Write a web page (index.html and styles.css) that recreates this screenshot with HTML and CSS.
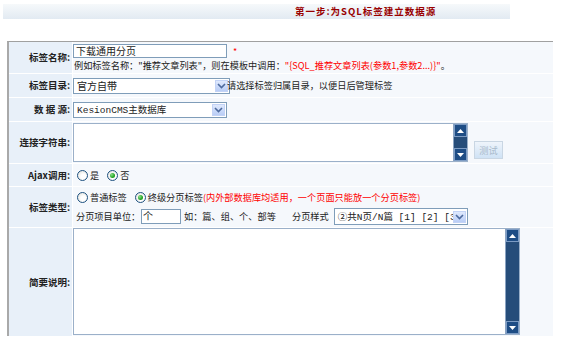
FILE: index.html
```html
<!DOCTYPE html>
<html>
<head>
<meta charset="utf-8">
<link rel="stylesheet" href="styles.css">
</head>
<body>
<div class="topbar"><span class="title">第一步:为SQL标签建立数据源</span></div>
<table class="form">
  <tr class="r1">
    <th>标签名称:</th>
    <td class="top">
      <div class="line"><span class="field w-name">下载通用分页</span><span class="req">*</span></div>
      <div class="hint">例如标签名称："推荐文章列表"，则在模板中调用：<span class="red">"{SQL_推荐文章列表(参数1,参数2...)}"</span>。</div>
    </td>
  </tr>
  <tr class="r2">
    <th>标签目录:</th>
    <td>
      <div class="line"><span class="select w-dir"><span class="sel-text">官方自带</span><span class="sel-btn"><svg width="9" height="6" viewBox="0 0 9 6"><path d="M1 1 L4.5 4.5 L8 1" fill="none" stroke="#4d6a9e" stroke-width="1.6"/></svg></span></span><span class="after">请选择标签归属目录，以便日后管理标签</span></div>
    </td>
  </tr>
  <tr class="r3">
    <th>数 据 源:</th>
    <td>
      <div class="line"><span class="select w-src"><span class="sel-text mono">KesionCMS<span class="cjk">主数据库</span></span><span class="sel-btn"><svg width="9" height="6" viewBox="0 0 9 6"><path d="M1 1 L4.5 4.5 L8 1" fill="none" stroke="#4d6a9e" stroke-width="1.6"/></svg></span></span></div>
    </td>
  </tr>
  <tr class="r4">
    <th>连接字符串:</th>
    <td class="top">
      <div class="line conn">
        <div class="area area-conn">
          <div class="area-body"></div>
          <div class="sbar">
            <span class="sbtn"><svg width="7" height="4" viewBox="0 0 7 4"><path d="M0 4 L3.5 0 L7 4 Z" fill="#fff"/></svg></span>
            <span class="strack"></span>
            <span class="sbtn"><svg width="7" height="4" viewBox="0 0 7 4"><path d="M0 0 L3.5 4 L7 0 Z" fill="#fff"/></svg></span>
          </div>
        </div>
        <span class="btn-test">测试</span>
      </div>
    </td>
  </tr>
  <tr class="r5">
    <th>Ajax调用:</th>
    <td>
      <div class="line radios">
        <span class="radio"></span><span class="rl">是</span>
        <span class="radio on"></span><span class="rl">否</span>
      </div>
    </td>
  </tr>
  <tr class="r6">
    <th>标签类型:</th>
    <td class="top">
      <div class="line radios l6a">
        <span class="radio"></span><span class="rl">普通标签</span>
        <span class="radio on"></span><span class="rl last">终级分页标签</span><span class="red">(内外部数据库均适用，一个页面只能放一个分页标签)</span>
      </div>
      <div class="line l6b">
        <span class="lbl">分页项目单位：</span><span class="field w-unit">个</span><span class="eg">如：篇、组、个、部等</span><span class="lbl2">分页样式</span><span class="select w-style"><span class="sel-text mono clip"><span class="cjk">②共</span>N<span class="cjk">页</span>/N<span class="cjk">篇</span> [1] [2] [3</span><span class="sel-btn"><svg width="9" height="6" viewBox="0 0 9 6"><path d="M1 1 L4.5 4.5 L8 1" fill="none" stroke="#4d6a9e" stroke-width="1.6"/></svg></span></span>
      </div>
    </td>
  </tr>
  <tr class="r7">
    <th>简要说明:</th>
    <td class="top">
      <div class="area area-desc">
        <div class="area-body"></div>
        <div class="sbar">
          <span class="sbtn"><svg width="7" height="4" viewBox="0 0 7 4"><path d="M0 4 L3.5 0 L7 4 Z" fill="#fff"/></svg></span>
          <span class="strack"></span>
          <span class="sbtn"><svg width="7" height="4" viewBox="0 0 7 4"><path d="M0 0 L3.5 4 L7 0 Z" fill="#fff"/></svg></span>
        </div>
      </div>
    </td>
  </tr>
</table>
</body>
</html>
```

FILE: styles.css
```css
* { box-sizing: border-box; }
html, body { margin: 0; padding: 0; background: #fff; }
body {
  font-family: "Noto Sans CJK SC", "Noto Sans", sans-serif;
  font-size: 9.2px;
  line-height: 11px;
  color: #222;
}
.topbar {
  margin: 4px 0 0 3px;
  width: 507px;
  height: 15px;
  background: linear-gradient(#f6f9fb, #e2eaf2);
  padding-left: 292px;
  display: flex;
  align-items: center;
}
.title {
  color: #990000;
  font-weight: bold;
  font-size: 9.5px;
  letter-spacing: 1px;
  white-space: nowrap;
}
.form {
  margin: 22px 0 0 7px;
  width: 546px;
  border-collapse: separate;
  border-spacing: 0;
  border-left: 2px solid #a9a9a9;
  border-top: 1px solid #a0a0a0;
}
.form th, .form td {
  padding: 0;
  border-bottom: 1px solid #fff;
  vertical-align: middle;
}
.form th {
  width: 64px;
  background: #e8f0f9;
  border-right: 1px solid #fff;
  text-align: right;
  padding-right: 2px;
  font-weight: bold;
  font-size: 9.5px;
  color: #222;
  white-space: nowrap;
}
.form td {
  background: #f5f8fc;
  white-space: nowrap;
}
.form td.top { vertical-align: top; }
.r1 th, .r1 td { height: 32px; }
.r2 th, .r2 td { height: 24px; }
.r3 th, .r3 td { height: 24px; }
.r4 th, .r4 td { height: 42px; }
.r5 th, .r5 td { height: 23px; }
.r6 th, .r6 td { height: 41px; }
.r7 th, .r7 td { height: 108px; border-bottom: 0; }

.line { display: flex; align-items: center; }
.r1 .line { margin-top: 2px; }
.hint { margin-top: 2px; padding-left: 1px; height: 11px; }
.red { color: #ff0000; }
.req { color: #ff0000; margin-left: 6px; font-size: 9px; }

.field {
  display: inline-block;
  height: 14px;
  border: 1px solid #7f9db9;
  background: #fff;
  line-height: 12px;
  padding-left: 2px;
  font-size: 10px;
}
.w-name { width: 154px; }
.w-unit { width: 40px; height: 15px; padding-left: 1px; }

.select {
  display: inline-flex;
  align-items: center;
  height: 16px;
  border: 1px solid #7f9db9;
  background: #fff;
  padding: 1px;
}
.sel-text { flex: 1; padding-left: 2px; font-size: 10px; line-height: 13px; }
.sel-text.clip { overflow: hidden; }
.mono { font-family: "Liberation Mono", "Noto Sans CJK SC", monospace; font-size: 9.5px; }
.cjk { font-family: "Noto Sans CJK SC", sans-serif; }
.sel-btn {
  flex: none;
  width: 13px;
  height: 12px;
  background: linear-gradient(#dfe9fd, #b9cdf6);
  border: 1px solid #c3d3f6;
  display: flex;
  align-items: center;
  justify-content: center;
}
.w-dir { width: 157px; }
.w-src { width: 154px; }
.w-style { width: 134px; height: 17px; }
.after { margin-left: -3px; }

.area {
  display: flex;
  border: 1px solid #9bb0c9;
  background: #fff;
}
.area-body { flex: 1; }
.area-conn { width: 395px; height: 39px; margin-top: 1px; }
.area-desc { width: 447px; height: 107px; }
.sbar {
  width: 14px;
  display: flex;
  flex-direction: column;
  background: #264d7a;
  border-left: 1px solid #8aa3c2;
}
.sbtn {
  height: 13px;
  background: #1e4d85;
  border: 1px solid #7d9cc4;
  display: flex;
  align-items: center;
  justify-content: center;
}
.strack { flex: 1; }
.btn-test {
  margin-left: 6px;
  margin-top: 19px;
  width: 29px;
  height: 18px;
  border: 1px solid #c9d6e3;
  background: linear-gradient(#eef4fb, #cfe2f5);
  color: #a9bacb;
  display: flex;
  align-items: center;
  justify-content: center;
}
.conn { align-items: flex-start; }

.radios { padding-left: 4px; }
.radio {
  width: 11px;
  height: 11px;
  border-radius: 50%;
  border: 1px solid #1d5180;
  background: radial-gradient(circle at 60% 60%, #ffffff 30%, #dcdcd5 100%);
  display: inline-flex;
  align-items: center;
  justify-content: center;
}
.radio.on::after {
  content: "";
  width: 5px;
  height: 5px;
  border-radius: 50%;
  background: radial-gradient(circle at 35% 35%, #8be08b, #21a121 60%);
}
.rl { margin-left: 2px; margin-right: 8px; }
.rl.last { margin-right: 0; }
.l6a { margin-top: 5px; }
.l6b { margin-top: 5px; padding-left: 3px; }
.lbl { width: 65px; }
.eg { margin-left: 3px; width: 108px; }
.lbl2 { margin-right: 5px; }
```
